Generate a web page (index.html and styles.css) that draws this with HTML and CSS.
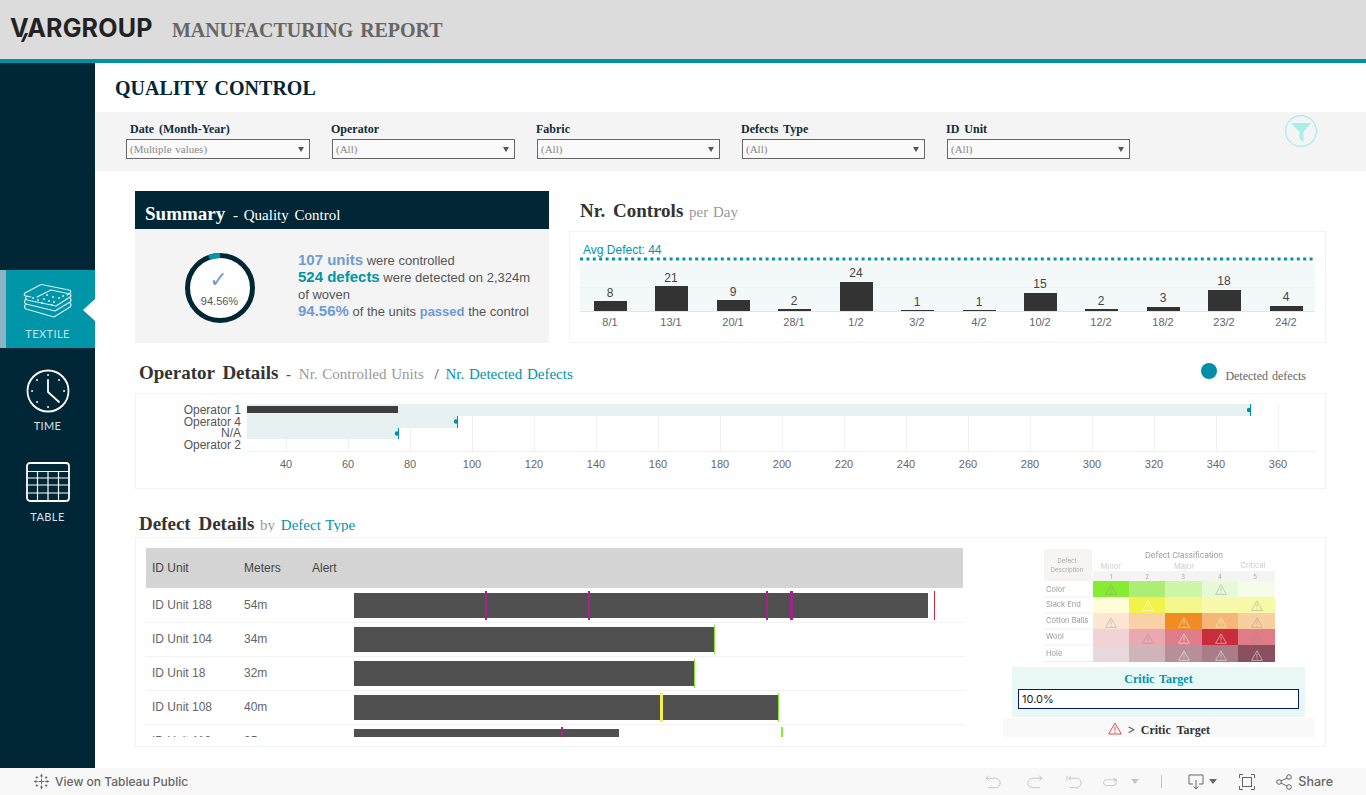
FILE: index.html
```html
<!DOCTYPE html>
<html>
<head>
    <meta charset="UTF-8">
    <link rel="stylesheet" href="styles.css">
</head>
<body>
    <header class="topbar">
        <div class="logo"><span class="logo-v">V</span>ARGROUP</div>
        <div class="report-title">MANUFACTURING REPORT</div>
    </header>

    <div class="page">
        <nav class="sidebar">
            <div class="nav-item active">
                <svg class="nav-icon textile" viewBox="0 0 50 36">
                    <path d="M2 10 L17 2 Q19 1 21 2 L46 7 Q49 8 47 10 L44 12 M2 10 Q0 12 3 13 L8 14"/>
                    <path d="M14 14 L28 7 L47 11 Q49 13 47 14 L33 23 L4 17 Q1 15 4 13"/>
                    <path d="M3 16 Q0 19 3 21 L32 28 L47 19 Q49 17 47 15"/>
                    <path d="M3 21 Q0 24 3 26 L31 34 L47 24 Q49 22 47 20"/>
                    <path class="dots" d="M10 15 h.1 M15 17 h.1 M21 16 h.1 M26 18 h.1 M31 19 h.1 M30 14 h.1 M36 15 h.1 M40 13 h.1 M24 12 h.1 M29 22 h.1 M19 20 h.1"/>
                </svg>
                <span>TEXTILE</span>
                <i class="pointer"></i>
            </div>
            <div class="nav-item time">
                <svg class="nav-icon clock" viewBox="0 0 44 44">
                    <circle cx="22" cy="22" r="20.5"/>
                    <path d="M22 11 V23 L33 33"/>
                    <path class="dots" d="M22 6 h.1 M22 38 h.1 M6 22 h.1 M38 22 h.1 M11 11 h.1 M33 11 h.1 M11 33 h.1"/>
                </svg>
                <span>TIME</span>
            </div>
            <div class="nav-item table">
                <svg class="nav-icon grid-icon" viewBox="0 0 44 40">
                    <rect x="1" y="1" width="42" height="38" rx="3"/>
                    <path class="thin" d="M1 9.5 H43 M1 16 H43 M1 23 H43 M1 31 H43 M11.500 9.500 V39 M22 9.500 V39 M32.500 9.500 V39"/>
                </svg>
                <span>TABLE</span>
            </div>
        </nav>

        <main class="main">
            <h1 class="page-title">QUALITY CONTROL</h1>

            <section class="filters">
                <div class="filter first">
                    <label>Date (Month-Year)</label>
                    <div class="select">(Multiple values)</div>
                </div>
                <div class="filter">
                    <label>Operator</label>
                    <div class="select">(All)</div>
                </div>
                <div class="filter">
                    <label>Fabric</label>
                    <div class="select">(All)</div>
                </div>
                <div class="filter">
                    <label>Defects Type</label>
                    <div class="select">(All)</div>
                </div>
                <div class="filter">
                    <label>ID Unit</label>
                    <div class="select">(All)</div>
                </div>
                <svg class="filter-btn" viewBox="0 0 32 32">
                    <circle cx="16" cy="16" r="15.400"/>
                    <path d="M6 8 H26 L18.500 17 V27 L14.500 24 V17 Z"/>
                </svg>
            </section>

            <div class="content">
                <div class="top-row">
                    <section class="summary">
                        <h2 class="summary-head">Summary <small>- Quality Control</small></h2>
                        <div class="summary-body">
                            <div class="donut">
                                <svg viewBox="0 0 70 70">
                                    <circle class="donut-ring" cx="35" cy="35" r="32.500"/>
                                    <path class="donut-arc" d="M35 2.500 A32.500 32.500 0 0 0 24 4.400"/>
                                </svg>
                                <div class="check">✓</div>
                                <div class="pct">94.56%</div>
                            </div>
                            <p class="summary-text">
                                <b class="blue">107 units</b> were controlled<br>
                                <b class="teal">524 defects</b> were detected on 2,324m<br>
                                of woven<br>
                                <b class="blue">94.56%</b> of the units <b class="blue small">passed</b> the control
                            </p>
                        </div>
                    </section>

                    <section class="controls">
                        <h2 class="section-head">Nr. Controls <small>per Day</small></h2>
                        <div class="box">
                            <svg class="chart" width="755" height="110" viewBox="570 232 755 110">
                                <text class="avg" x="583" y="254">Avg Defect: 44</text>
                                <rect class="band" x="580" y="263" width="735" height="48"/>
                                <path class="grid" d="M580 287 H1315"/>
                                <path class="dotted" d="M580 259 H1315"/>
                                <path class="axis" d="M580 311.500 H1315"/>
                                <g class="bars">
                                    <rect x="594" y="301" width="33" height="10"/>
                                    <rect x="655" y="286" width="33" height="25"/>
                                    <rect x="717" y="300" width="33" height="11"/>
                                    <rect x="778" y="309" width="33" height="2"/>
                                    <rect x="840" y="282" width="33" height="29"/>
                                    <rect x="901" y="310" width="33" height="1"/>
                                    <rect x="963" y="310" width="33" height="1"/>
                                    <rect x="1024" y="293" width="33" height="18"/>
                                    <rect x="1085" y="309" width="33" height="2"/>
                                    <rect x="1147" y="307" width="33" height="4"/>
                                    <rect x="1208" y="290" width="33" height="21"/>
                                    <rect x="1270" y="306" width="33" height="5"/>
                                </g>
                                <g class="val">
                                    <text x="610" y="297">8</text>
                                    <text x="671" y="282">21</text>
                                    <text x="733" y="296">9</text>
                                    <text x="794" y="305">2</text>
                                    <text x="856" y="277">24</text>
                                    <text x="917" y="306">1</text>
                                    <text x="979" y="306">1</text>
                                    <text x="1040" y="288">15</text>
                                    <text x="1101" y="305">2</text>
                                    <text x="1163" y="302">3</text>
                                    <text x="1224" y="285">18</text>
                                    <text x="1286" y="301">4</text>
                                </g>
                                <g class="tick">
                                    <text x="610" y="326">8/1</text>
                                    <text x="671" y="326">13/1</text>
                                    <text x="733" y="326">20/1</text>
                                    <text x="794" y="326">28/1</text>
                                    <text x="856" y="326">1/2</text>
                                    <text x="917" y="326">3/2</text>
                                    <text x="979" y="326">4/2</text>
                                    <text x="1040" y="326">10/2</text>
                                    <text x="1101" y="326">12/2</text>
                                    <text x="1163" y="326">18/2</text>
                                    <text x="1224" y="326">23/2</text>
                                    <text x="1286" y="326">24/2</text>
                                </g>
                            </svg>
                        </div>
                    </section>
                </div>

                <div class="operator-head">
                    <h2 class="section-head">Operator Details <b class="dash">-</b> <small>Nr. Controlled Units</small> <small class="slash">/</small> <small class="teal">Nr. Detected Defects</small></h2>
                    <div class="legend"><i></i>Detected defects</div>
                </div>
                <div class="box operators">
                    <svg class="chart" width="1189" height="94" viewBox="136 394 1189 94">
                        <path class="grid" d="M286 404 V451 M348 404 V451 M410 404 V451 M472 404 V451 M534 404 V451 M596 404 V451 M658 404 V451 M720 404 V451 M782 404 V451 M844 404 V451 M906 404 V451 M968 404 V451 M1030 404 V451 M1092 404 V451 M1154 404 V451 M1216 404 V451 M1278 404 V451"/>
                        <path class="grid" d="M247 451 H1316"/>
                        <rect class="light" x="247" y="404" width="1004" height="12"/>
                        <rect class="light" x="247" y="416" width="211" height="12"/>
                        <rect class="light" x="247" y="428" width="152" height="11"/>
                        <rect class="dark" x="247" y="406" width="151" height="7"/>
                        <g class="marker">
                            <circle cx="1249" cy="410" r="2.200"/><path d="M1250.500 404 V416"/>
                            <circle cx="456" cy="421.500" r="2.200"/><path d="M457.500 416 V428"/>
                            <circle cx="397" cy="433.500" r="2.200"/><path d="M398.500 428 V439"/>
                        </g>
                        <g class="op-label">
                            <text x="241" y="414">Operator 1</text>
                            <text x="241" y="426">Operator 4</text>
                            <text x="241" y="437">N/A</text>
                            <text x="241" y="449">Operator 2</text>
                        </g>
                        <g class="tick">
                            <text x="286" y="468">40</text><text x="348" y="468">60</text><text x="410" y="468">80</text>
                            <text x="472" y="468">100</text><text x="534" y="468">120</text><text x="596" y="468">140</text>
                            <text x="658" y="468">160</text><text x="720" y="468">180</text><text x="782" y="468">200</text>
                            <text x="844" y="468">220</text><text x="906" y="468">240</text><text x="968" y="468">260</text>
                            <text x="1030" y="468">280</text><text x="1092" y="468">300</text><text x="1154" y="468">320</text>
                            <text x="1216" y="468">340</text><text x="1278" y="468">360</text>
                        </g>
                    </svg>
                </div>

                <div class="defect-head">
                    <h2 class="section-head">Defect Details <small>by</small> <small class="teal">Defect Type</small></h2>
                </div>
                <div class="box defects">
                    <div class="unit-table">
                        <div class="unit-row unit-header">
                            <span>ID Unit</span><span>Meters</span><span>Alert</span>
                        </div>
                        <div class="unit-body">
                            <div class="unit-row">
                                <span>ID Unit 188</span><span>54m</span><span></span>
                                <div class="track">
                                    <div class="bar" style="width:574px"></div>
                                    <i class="mark purple" style="left:131px"></i>
                                    <i class="mark purple" style="left:234px"></i>
                                    <i class="mark purple" style="left:412px"></i>
                                    <i class="mark purple wide" style="left:436px"></i>
                                    <i class="mark red thin" style="left:580px"></i>
                                </div>
                            </div>
                            <div class="unit-row">
                                <span>ID Unit 104</span><span>34m</span><span></span>
                                <div class="track">
                                    <div class="bar" style="width:360px"></div>
                                    <i class="mark green thin" style="left:360px"></i>
                                </div>
                            </div>
                            <div class="unit-row">
                                <span>ID Unit 18</span><span>32m</span><span></span>
                                <div class="track">
                                    <div class="bar" style="width:340px"></div>
                                    <i class="mark green thin" style="left:340px"></i>
                                </div>
                            </div>
                            <div class="unit-row">
                                <span>ID Unit 108</span><span>40m</span><span></span>
                                <div class="track">
                                    <div class="bar" style="width:424px"></div>
                                    <i class="mark yellow wide" style="left:306px"></i>
                                    <i class="mark green thin" style="left:424px"></i>
                                </div>
                            </div>
                            <div class="unit-row">
                                <span>ID Unit 110</span><span>35m</span><span></span>
                                <div class="track">
                                    <div class="bar" style="width:265px"></div>
                                    <i class="mark purple" style="left:207px"></i>
                                    <i class="mark green" style="left:427px"></i>
                                </div>
                            </div>
                        </div>
                    </div>

                    <aside class="legend-panel">
                        <svg class="heatmap" width="232" height="113" viewBox="1043 549 232 113">
                            <defs>
                                <symbol id="warn" viewBox="0 0 12 11">
                                    <path d="M6 .8 L11.400 10.400 H.6 Z M6 3.500 V7.500 M6 8.500 V9.500"/>
                                </symbol>
                            </defs>
                            <rect x="1044" y="549" width="48" height="32" fill="#f7f5f3"/>
                            <rect x="1093" y="571" width="182" height="10" fill="#f6f4f2"/>
                            <g class="hm-head">
                                <text x="1067" y="563">Defect</text>
                                <text x="1067" y="572">Description</text>
                                <text class="hm-top" x="1184" y="558">Defect Classification</text>
                                <text class="hm-sub" x="1111" y="569">Minor</text>
                                <text class="hm-sub" x="1184" y="569">Major</text>
                                <text class="hm-sub" x="1253" y="568">Critical</text>
                                <text x="1111" y="579">1</text><text x="1147" y="579">2</text><text x="1183" y="579">3</text><text x="1220" y="579">4</text><text x="1255" y="579">5</text>
                            </g>
                            <g class="hm-row">
                                <text x="1046" y="592">Color</text>
                                <text x="1046" y="607">Slack End</text>
                                <text x="1046" y="623">Cotton Balls</text>
                                <text x="1046" y="639">Wool</text>
                                <text x="1046" y="656">Hole</text>
                            </g>
                            <path class="hm-lines" d="M1044 597 H1093 M1044 613 H1093 M1044 629 H1093 M1044 645 H1093 M1044 661.500 H1093"/>
                            <rect x="1093" y="581" width="36" height="16" fill="#86ec32"/><rect x="1129" y="581" width="36" height="16" fill="#aeed74"/><rect x="1165" y="581" width="37" height="16" fill="#ccf7a6"/><rect x="1202" y="581" width="36" height="16" fill="#e6fad6"/><rect x="1238" y="581" width="37" height="16" fill="#f5fdea"/>
                            <rect x="1093" y="597" width="36" height="16" fill="#fdfdd8"/><rect x="1129" y="597" width="36" height="16" fill="#f3f24a"/><rect x="1165" y="597" width="37" height="16" fill="#f5f68c"/><rect x="1202" y="597" width="36" height="16" fill="#f8f9ab"/><rect x="1238" y="597" width="37" height="16" fill="#f8f9a6"/>
                            <rect x="1093" y="613" width="36" height="16" fill="#fce6d3"/><rect x="1129" y="613" width="36" height="16" fill="#fad0a6"/><rect x="1165" y="613" width="37" height="16" fill="#f08c22"/><rect x="1202" y="613" width="36" height="16" fill="#f6b678"/><rect x="1238" y="613" width="37" height="16" fill="#f8cfa0"/>
                            <rect x="1093" y="629" width="36" height="16" fill="#f3d2d6"/><rect x="1129" y="629" width="36" height="16" fill="#eaa8b0"/><rect x="1165" y="629" width="37" height="16" fill="#de7d88"/><rect x="1202" y="629" width="36" height="16" fill="#c92c3a"/><rect x="1238" y="629" width="37" height="16" fill="#e07c86"/>
                            <rect x="1093" y="645" width="36" height="17" fill="#e6d8dc"/><rect x="1129" y="645" width="36" height="17" fill="#d0b4bc"/><rect x="1165" y="645" width="37" height="17" fill="#b78f9a"/><rect x="1202" y="645" width="36" height="17" fill="#a87c88"/><rect x="1238" y="645" width="37" height="17" fill="#8a5060"/>
                            <g class="hm-warn">
                                <use href="#warn" x="1105" y="584" width="12" height="11"/>
                                <use href="#warn" x="1215" y="584" width="12" height="11"/>
                                <use class="pale" href="#warn" x="1142" y="600" width="12" height="11"/>
                                <use href="#warn" x="1251" y="600" width="12" height="11"/>
                                <use href="#warn" x="1105" y="617" width="12" height="11"/>
                                <use class="pale" href="#warn" x="1178" y="617" width="12" height="11"/>
                                <use class="pale" href="#warn" x="1215" y="617" width="12" height="11"/>
                                <use href="#warn" x="1251" y="617" width="12" height="11"/>
                                <use href="#warn" x="1142" y="633" width="12" height="11"/>
                                <use class="pale" href="#warn" x="1178" y="633" width="12" height="11"/>
                                <use class="pale" href="#warn" x="1215" y="633" width="12" height="11"/>
                                <use href="#warn" x="1251" y="633" width="12" height="11"/>
                                <use class="pale" href="#warn" x="1178" y="650" width="12" height="11"/>
                                <use class="pale" href="#warn" x="1215" y="650" width="12" height="11"/>
                                <use class="pale" href="#warn" x="1251" y="650" width="12" height="11"/>
                            </g>
                        </svg>
                        <div class="critic">
                            <div class="critic-title">Critic Target</div>
                            <div class="critic-input">10.0%</div>
                        </div>
                        <div class="critic-note">
                            <svg class="note-icon" viewBox="0 0 14 13"><path d="M7 1 L13.300 12 H.7 Z M7 4.500 V8.800 M7 9.800 V11"/></svg>
                            &gt; Critic Target
                        </div>
                    </aside>
                </div>
            </div>
        </main>
    </div>

    <footer class="toolbar">
        <div class="tableau-link">
            <svg class="tb-logo" viewBox="0 0 18 18">
                <path d="M9 1 V5 M7.500 3 H10.500 M9 13 V17 M7.500 15 H10.500 M1 9 H5 M3 7.500 V10.500 M13 9 H17 M15 7.500 V10.500 M9 6 V12 M6 9 H12 M4 3.500 V6 M2.800 4.700 H5.200 M14 3.500 V6 M12.800 4.700 H15.200 M4 12 V14.500 M2.800 13.300 H5.200 M14 12 V14.500 M12.800 13.300 H15.200"/>
            </svg>
            View on Tableau Public
        </div>
        <div class="tools">
            <svg class="tool off undo" viewBox="0 0 18 14"><path d="M1 3 H11 A5 5 0 0 1 11 13 H3 M4 .5 L1 3 L4 5.500"/></svg>
            <svg class="tool off redo" viewBox="0 0 18 14"><path d="M17 3 H7 A5 5 0 0 0 7 13 H15 M14 .5 L17 3 L14 5.500"/></svg>
            <svg class="tool off revert" viewBox="0 0 18 14"><path d="M1 .5 V5.500 M3 3 H11 A5 5 0 0 1 11 13 H4 M5 .5 L3 3 L5 5.500"/></svg>
            <svg class="tool off refresh" viewBox="0 0 18 10"><path d="M13 .5 L16 2.500 L13 4.500 M16 2.500 H5 A3 3 0 0 0 5 9 H13 A3 3 0 0 0 16 6 V2.500"/></svg>
            <i class="caret off"></i>
            <span class="sep"></span>
            <svg class="tool dl" viewBox="0 0 16 16"><path d="M5 10 H1 V1 H15 V10 H11 M8 6 V15 M5.500 12.500 L8 15 L10.500 12.500"/></svg>
            <i class="caret"></i>
            <svg class="tool full" viewBox="0 0 16 16"><rect x="3.500" y="3.500" width="9" height="9"/><path d="M.5 4 V.5 H4 M12 .5 H15.500 V4 M15.500 12 V15.500 H12 M4 15.500 H.5 V12"/></svg>
            <div class="share">
                <svg class="tool" viewBox="0 0 16 16"><circle cx="3" cy="8" r="2.300"/><circle cx="13" cy="3" r="2.300"/><circle cx="13" cy="13" r="2.300"/><path d="M5 7 L11 4 M5 9 L11 12"/></svg>
                Share
            </div>
        </div>
    </footer>
</body>
</html>
```

FILE: styles.css
```css
* {
    box-sizing: border-box;
}
body {
    margin: 0;
    width: 1366px;
    height: 795px;
    overflow: hidden;
    background: #fff;
    font-family: "Liberation Sans", Arial, sans-serif;
    display: flex;
    flex-direction: column;
}
h1, h2, p {
    margin: 0;
}

/* top bar */
.topbar {
    height: 63px;
    flex: none;
    background: #dcdcdc;
    border-bottom: 4px solid #0090a6;
    display: flex;
    align-items: flex-start;
}
.logo {
    position: relative;
    margin: 13px 0 0 10px;
    width: 162px;
    font-family: Inter, "Liberation Sans", sans-serif;
    font-weight: 700;
    font-size: 25px;
    line-height: 30px;
    letter-spacing: .2px;
    color: #222;
}
.logo-v {
    letter-spacing: -1.500px;
}
.logo::after {
    content: "";
    position: absolute;
    left: 13px;
    top: 20px;
    width: 3px;
    height: 9px;
    background: #222;
    transform: skewX(-25deg);
}
.report-title {
    margin-top: 18px;
    font-family: "Liberation Serif", serif;
    font-weight: bold;
    font-size: 20px;
    line-height: 24px;
    letter-spacing: -.05px;
    word-spacing: 2px;
    color: #666;
}

.page {
    flex: 1;
    min-height: 0;
    display: flex;
}

/* side navigation */
.sidebar {
    width: 95px;
    flex: none;
    background: #012636;
    padding-top: 207px;
}
.nav-item {
    position: relative;
    display: flex;
    flex-direction: column;
    align-items: center;
    font-family: Lato, sans-serif;
    font-size: 11px;
    letter-spacing: .4px;
    color: #d8e2e6;
}
.nav-item.active {
    height: 78px;
    background: #0095a8;
    border-left: 6px solid #8ab4c6;
    padding: 13px 6px 0 0;
    color: #bfe6ea;
    margin-bottom: 21px;
}
.nav-item.active span {
    margin-top: 8px;
}
.nav-item.time {
    height: 93px;
}
.nav-item.time span {
    margin-top: 6px;
}
.nav-item.table span {
    margin-top: 8px;
}
.nav-icon {
    display: block;
    fill: none;
    stroke: #fff;
    stroke-width: 1.6;
    stroke-linecap: round;
    stroke-linejoin: round;
}
.nav-icon.textile {
    width: 50px;
    height: 36px;
    stroke: #d5f0f2;
    stroke-width: 1.2;
}
.nav-icon.clock {
    width: 44px;
    height: 44px;
    stroke-width: 1.8;
}
.nav-icon .dots {
    stroke-width: 1.8;
}
.nav-icon.grid-icon {
    width: 44px;
    height: 40px;
    stroke-width: 1.8;
}
.nav-icon .thin {
    stroke-width: 1.2;
    stroke-linecap: butt;
}
.pointer {
    position: absolute;
    right: 0;
    top: 29px;
    width: 0;
    height: 0;
    border-top: 11px solid transparent;
    border-bottom: 11px solid transparent;
    border-right: 12px solid #fff;
}

/* main area */
.main {
    flex: 1;
    min-width: 0;
}
.page-title {
    height: 49px;
    padding: 13px 0 0 20px;
    font-family: "Liberation Serif", serif;
    font-weight: bold;
    font-size: 20px;
    line-height: 24px;
    word-spacing: 2px;
    color: #012636;
}
.filters {
    position: relative;
    height: 59px;
    background: #f4f4f4;
    padding: 10px 0 0 31px;
    display: flex;
}
.filter {
    width: 205px;
}
.filter.first {
    width: 206px;
}
.filter label {
    display: block;
    margin-left: -1px;
    height: 17px;
    font-family: "Liberation Serif", serif;
    font-weight: bold;
    font-size: 12px;
    line-height: 14px;
    word-spacing: 2px;
    color: #0f2c3a;
}
.filter.first label {
    margin-left: 4px;
}
.select {
    position: relative;
    width: 183px;
    height: 20px;
    border: 1px solid #666;
    background: #fafafa;
    padding-left: 3px;
    font-family: "Liberation Serif", serif;
    font-size: 11px;
    line-height: 19px;
    word-spacing: 1px;
    color: #888;
}
.filter.first .select {
    width: 184px;
}
.select::after {
    content: "";
    position: absolute;
    right: 5px;
    top: 7px;
    border-left: 3.500px solid transparent;
    border-right: 3.500px solid transparent;
    border-top: 5px solid #555;
}
.filter-btn {
    position: absolute;
    left: 1190px;
    top: 3px;
    width: 32px;
    height: 32px;
}
.filter-btn circle {
    fill: #f4f4f4;
    stroke: #9ff0e6;
    stroke-width: 1.2;
}
.filter-btn path {
    fill: #a6f0e8;
}

.content {
    margin-left: 40px;
    width: 1191px;
}
.section-head {
    font-family: "Liberation Serif", serif;
    font-weight: bold;
    font-size: 19px;
    line-height: 22px;
    word-spacing: 3px;
    color: #333;
}
.section-head small {
    margin-left: -2px;
    font-weight: normal;
    font-size: 15px;
    word-spacing: 1px;
    color: #999;
}
.section-head .dash {
    font-size: 15px;
    color: #555;
    margin: 0 2px 0 0;
}
.section-head small.slash {
    color: #333;
    margin: 0 1px 0 3px;
}
.section-head small.teal {
    color: #0095a8;
}
.box {
    border: 1px solid #f2f2f2;
}
.chart {
    display: block;
}

/* summary row */
.top-row {
    display: flex;
    gap: 20px;
    padding-top: 20px;
}
.summary {
    width: 414px;
    height: 152px;
    background: #f4f4f4;
}
.summary-head {
    height: 38px;
    background: #012636;
    padding: 11px 0 0 10px;
    font-family: "Liberation Serif", serif;
    font-weight: bold;
    font-size: 19px;
    line-height: 24px;
    word-spacing: 3px;
    color: #fff;
}
.summary-head small {
    font-weight: normal;
    font-size: 15px;
    word-spacing: 2px;
}
.summary-body {
    display: flex;
    padding: 24px 0 0 50px;
}
.donut {
    position: relative;
    width: 70px;
    height: 70px;
    flex: none;
    text-align: center;
}
.donut svg {
    position: absolute;
    left: 0;
    top: 0;
    width: 70px;
    height: 70px;
}
.donut-ring {
    fill: #fff;
    stroke: #012636;
    stroke-width: 5;
}
.donut-arc {
    fill: none;
    stroke: #0095a8;
    stroke-width: 5;
}
.check {
    position: relative;
    padding: 14px 3px 0 0;
    font-family: "DejaVu Sans", sans-serif;
    font-size: 22px;
    line-height: 26px;
    color: #6f9bd1;
}
.pct {
    position: relative;
    padding-right: 1px;
    font-size: 11px;
    line-height: 12px;
    margin-top: 2px;
    color: #555;
}
.summary-text {
    margin: -1px 0 0 43px;
    font-size: 13px;
    line-height: 17px;
    white-space: nowrap;
    color: #555;
}
.summary-text b {
    font-size: 15px;
    line-height: 1;
}
.summary-text b.small {
    font-size: 13px;
}
.blue {
    color: #6f9bd1;
}
.teal {
    color: #0095a8;
}

/* nr controls chart */
.controls {
    flex: 1;
}
.controls .section-head {
    height: 40px;
    padding: 9px 0 0 11px;
}
.controls .box {
    height: 112px;
}
.avg {
    font-size: 12px;
    fill: #0095a8;
}
.band {
    fill: #f3f8f8;
}
.grid {
    fill: none;
    stroke: #f0f0f0;
    stroke-width: 1;
    shape-rendering: crispEdges;
}
.dotted {
    fill: none;
    stroke: #0095a8;
    stroke-width: 3;
    stroke-dasharray: 3 3.400;
}
.axis {
    fill: none;
    stroke: #e4e4e4;
    stroke-width: 1;
}
.bars rect {
    fill: #333;
}
.val text {
    font-size: 12px;
    text-anchor: middle;
    fill: #444;
}
.tick text {
    font-size: 11px;
    text-anchor: middle;
    fill: #666;
}

/* operators */
.operator-head {
    height: 50px;
    padding: 19px 4px 0;
    display: flex;
    justify-content: space-between;
}
.legend {
    margin: 3px 16px 0 0;
    display: flex;
    align-items: center;
    height: 22px;
    font-family: "Liberation Serif", serif;
    font-size: 12px;
    word-spacing: 1px;
    color: #666;
}
.legend i {
    width: 16px;
    height: 16px;
    margin: -10px 8px 0 0;
    border-radius: 50%;
    background: #008fa8;
}
.operators {
    height: 96px;
}
.light {
    fill: #e8f1f2;
}
.dark {
    fill: #3f3f3f;
}
.marker circle {
    fill: #008fa8;
}
.marker path {
    fill: none;
    stroke: #008fa8;
    stroke-width: 1;
}
.op-label text {
    font-size: 12px;
    text-anchor: end;
    fill: #555;
}

/* defects */
.defect-head {
    height: 48px;
    padding: 24px 4px 0;
}
.defect-head .section-head {
    height: 19px;
    overflow: hidden;
}
.defects {
    height: 210px;
    padding: 10px 0 0 10px;
    display: flex;
}
.unit-table {
    width: 819px;
    flex: none;
}
.unit-body {
    height: 149px;
    overflow: hidden;
}
.unit-row {
    position: relative;
    height: 34px;
    display: flex;
    align-items: center;
    box-shadow: 0 1px 0 #f2f2f2;
    font-size: 12px;
    color: #666;
}
.unit-row span {
    padding-left: 6px;
}
.unit-row span:nth-child(1) {
    width: 92px;
}
.unit-row span:nth-child(2) {
    width: 68px;
}
.unit-row span:nth-child(3) {
    width: 48px;
}
.unit-header {
    width: 817px;
    height: 40px;
    background: #d4d4d4;
    box-shadow: none;
    color: #444;
}
.track {
    position: absolute;
    left: 208px;
    top: 5px;
    right: 0;
    height: 25px;
    border-left: 1px solid #f0f0f0;
}
.bar {
    height: 25px;
    margin-left: -1px;
    background: #505050;
}
.mark {
    position: absolute;
    top: -2px;
    width: 2px;
    height: 29px;
    margin-left: -1px;
}
.mark.wide {
    width: 3px;
}
.mark.thin {
    width: 1px;
}
.purple {
    background: #a8228f;
}
.green {
    background: #86ec32;
}
.yellow {
    background: #f3f24a;
}
.red {
    background: #c92c3a;
}

/* right legend */
.legend-panel {
    flex: 1;
    position: relative;
}
.heatmap {
    display: block;
    margin: 1px 0 0 78px;
    filter: blur(.3px);
}
.hm-head text {
    font-family: Inter, sans-serif;
    font-size: 6px;
    text-anchor: middle;
    fill: #aaa;
}
.hm-head .hm-top {
    font-size: 8px;
    fill: #999;
}
.hm-head .hm-sub {
    font-size: 7.500px;
    fill: #ccc;
}
.hm-row text {
    font-family: Inter, sans-serif;
    font-size: 7.500px;
    fill: #999;
}
.hm-lines {
    fill: none;
    stroke: #f0f0f0;
    stroke-width: 1;
}
.hm-warn use {
    fill: none;
    stroke: #8f8f8f;
    stroke-width: .7;
    opacity: .6;
}
.hm-warn .pale {
    stroke: #fff;
    opacity: .7;
}
.critic {
    margin: 5px 0 0 47px;
    width: 293px;
    height: 50px;
    background: #e9f8f5;
    padding: 5px 6px 0;
}
.critic-title {
    height: 17px;
    text-align: center;
    font-family: "Liberation Serif", serif;
    font-weight: bold;
    font-size: 12px;
    line-height: 14px;
    word-spacing: 2px;
    color: #0095a8;
}
.critic-input {
    height: 20px;
    border: 1px solid #001a80;
    background: #fff;
    padding-left: 3px;
    font-family: Inter, sans-serif;
    font-size: 11px;
    line-height: 18px;
    color: #222;
}
.critic-note {
    margin: 1px 0 0 38px;
    width: 312px;
    height: 19px;
    background: #f9f9f9;
    padding-top: 5px;
    display: flex;
    justify-content: center;
    align-items: center;
    gap: 6px;
    font-family: "Liberation Serif", serif;
    font-weight: bold;
    font-size: 12px;
    word-spacing: 3px;
    color: #333;
}
.note-icon {
    width: 14px;
    height: 13px;
    margin-top: -4px;
    fill: none;
    stroke: #d8404a;
    stroke-width: .9;
}

/* bottom toolbar */
.toolbar {
    height: 27px;
    flex: none;
    background: #f8f8f8;
    display: flex;
    justify-content: space-between;
    align-items: center;
    font-family: Inter, sans-serif;
    font-size: 12.500px;
    font-weight: 500;
    color: #666;
}
.tableau-link {
    display: flex;
    align-items: center;
    gap: 5px;
    padding-left: 33px;
    font-size: 12px;
}
.tb-logo {
    width: 17px;
    height: 17px;
    fill: none;
    stroke: #666;
    stroke-width: 1;
}
.tools {
    display: flex;
    align-items: center;
    padding-right: 33px;
}
.tool {
    display: block;
    width: 16px;
    height: 16px;
    fill: none;
    stroke: #666;
    stroke-width: 1;
}
.tool.off {
    stroke: #c4c4c4;
    width: 17px;
    height: 14px;
}
.undo {
    margin-right: 24px;
}
.redo {
    margin-right: 23px;
}
.revert {
    margin-right: 19px;
}
.tool.refresh {
    height: 10px;
    width: 16px;
    margin-right: 13px;
}
.caret {
    width: 0;
    height: 0;
    border-left: 4px solid transparent;
    border-right: 4px solid transparent;
    border-top: 5px solid #666;
}
.caret.off {
    border-top-color: #c4c4c4;
}
.sep {
    width: 1px;
    height: 13px;
    background: #c4c4c4;
    margin: 0 26px 0 22px;
}
.dl {
    margin-right: 5px;
}
.full {
    margin-left: 22px;
    margin-right: 21px;
}
.share {
    display: flex;
    align-items: center;
    gap: 6px;
}
```
